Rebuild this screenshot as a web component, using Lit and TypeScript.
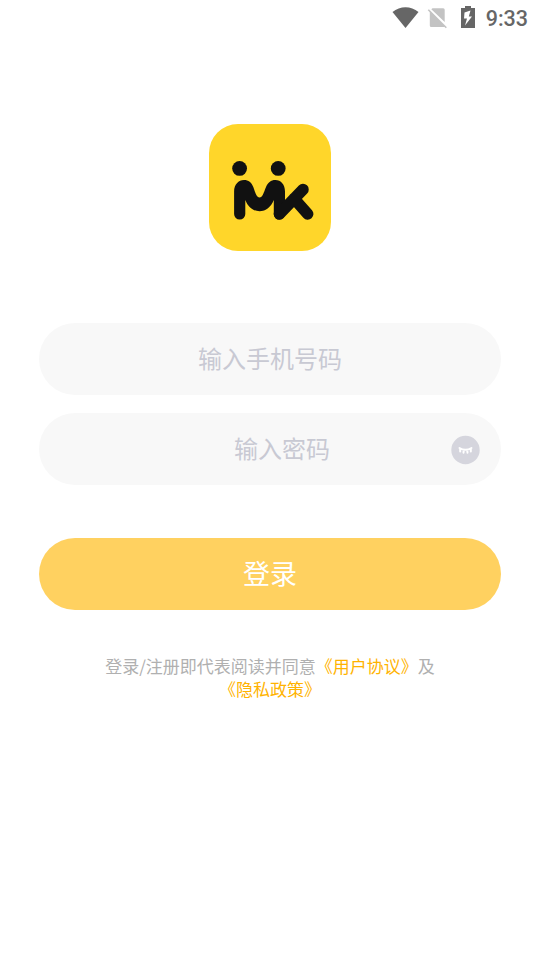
import { LitElement, html, css } from 'lit';
import { customElement } from 'lit/decorators.js';

@customElement('status-bar')
export class StatusBar extends LitElement {
    static styles = css`
        :host {
            display: flex;
            align-items: center;
            justify-content: flex-end;
            height: 36px;
            padding-right: 12px;
            box-sizing: border-box;
            color: #666;
            font: 500 21.5px/36px Roboto, sans-serif;
        }

        svg {
            display: block;
            width: 96px;
            height: 36px;
        }

        span {
            padding-top: 2px;
        }
    `;

    render() {
        return html`
            <svg viewBox="390 0 96 36">
                <path fill="#666" d="M392.500 12C400 5.500 411 5.500 418.500 12L405.500 28Z" />
                <path fill="#c3c3c3" d="M432.500 8.300H443.200Q444.700 8.300 444.700 9.800V22L431.300 9.200ZM429.800 11L445 26.500L444 27H431.300Q429.800 27 429.800 25.500Z" />
                <path stroke="#c3c3c3" stroke-width="1.600" d="M428.300 9.700L446.300 27.700" />
                <path fill="#666" fill-rule="evenodd" d="M465 6H471V8H475V28H461V8H465ZM470.500 10.500L464.500 12.500L464 18.500H467L465 25.500L472 16.500H468.800Z" />
            </svg>
            <span>9:33</span>
        `;
    }
}

@customElement('app-root')
export class AppRoot extends LitElement {
    static styles = css`
        :host {
            display: flex;
            flex-direction: column;
            height: 960px;
            background: #fff;
            font-family: "Noto Sans CJK SC", sans-serif;
        }

        .logo {
            display: block;
            width: 124px;
            height: 128px;
            margin: 87px auto 0;
        }

        .form {
            display: flex;
            flex-direction: column;
            gap: 18px;
            padding: 72px 39px 0;
        }

        .field {
            display: flex;
            align-items: center;
            height: 72px;
            box-sizing: border-box;
            border-radius: 36px;
            background: #f8f8f8;
            color: #c8c9d3;
            font-size: 24px;
            line-height: 36px;
            text-align: center;
        }

        .field span {
            flex: 1;
            padding-bottom: 2px;
        }

        .password {
            padding: 0 20px 0 74px;
        }

        .field svg {
            width: 30px;
            height: 30px;
            margin-top: 1px;
        }

        .login {
            height: 72px;
            margin-top: 35px;
            padding: 0 0 2px;
            border: 0;
            border-radius: 36px;
            background: #ffd160;
            color: #fff;
            font: 27px/70px "Noto Sans CJK SC", sans-serif;
        }

        .agreement {
            margin: 44px 90px 0;
            color: #b0b0b0;
            font-size: 17px;
            line-height: 23px;
            text-align: center;
        }

        .agreement a {
            color: #ffb300;
        }
    `;

    render() {
        return html`
            <status-bar></status-bar>
            <svg class="logo" viewBox="208 123 124 128">
                <rect x="209" y="124" width="122" height="127" rx="29" fill="#ffd62a" />
                <g fill="#111">
                    <circle cx="239.600" cy="168.400" r="7.400" />
                    <circle cx="278.200" cy="168.400" r="7.400" />
                    <path d="M234.100 214V191.500C234.100 184.500 238.500 180 244 180C248.500 180 251.600 182.500 253.300 187C255.300 192.500 256.500 197.500 259.500 197.500C262.500 197.500 263.800 192.500 265.800 187.500C267.700 182.500 271 180 275.300 180C281 180 285 184.500 285 191.500V214A5.600 5.600 0 0 1 273.800 214V200C271 207 266 211.200 259.500 211.200C253 211.200 248 207 245.300 200V214A5.600 5.600 0 0 1 234.100 214Z" />
                </g>
                <path d="M279.400 214L303 189.500M294 198.500L307.700 214" fill="none" stroke="#111" stroke-width="11.500" stroke-linecap="round" />
            </svg>
            <div class="form">
                <div class="field"><span>输入手机号码</span></div>
                <div class="field password">
                    <span>输入密码</span>
                    <svg viewBox="0 0 30 30">
                        <circle cx="14.500" cy="15" r="14.200" fill="#d5d5dd" />
                        <path d="M8.500 13Q14.500 16.500 20.500 13M9.200 13.500V16.500M12.800 15L12.500 17.700M16.200 15L16.500 17.700M19.800 13.500V16.500" fill="none" stroke="#fff" stroke-width="2" stroke-linecap="round" />
                    </svg>
                </div>
                <button class="login">登录</button>
            </div>
            <div class="agreement">登录/注册即代表阅读并同意<a>《用户协议》</a>及<br /><a>《隐私政策》</a></div>
        `;
    }
}
